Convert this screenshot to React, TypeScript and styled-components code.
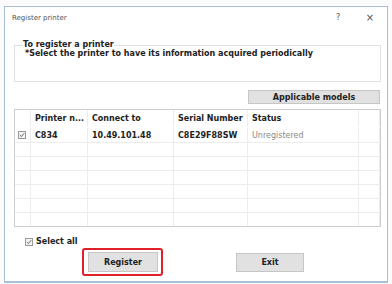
import React from "react";
import styled, { createGlobalStyle } from "styled-components";

const Global = createGlobalStyle`
  html, body { margin: 0; padding: 0; background: #ffffff; }
  body { font-family: "DejaVu Sans", Verdana, sans-serif; color: #1e1e1e; }
`;

const Page = styled.div`
  width: 392px;
  height: 284px;
  padding: 6px 4px 0 4px;
  box-sizing: border-box;
  background: #fbfbfb;
`;

const Window = styled.div`
  width: 384px;
  height: 277px;
  box-sizing: border-box;
  border: 1px solid #a9c0d8;
  border-bottom: 2px solid #a9c0d8;
  background: #ffffff;
  display: flex;
  flex-direction: column;
`;

const TitleBar = styled.div`
  height: 21px;
  display: flex;
  align-items: center;
  padding: 0 0 0 7px;
  font-size: 7px;
  color: #555;
`;

const TitleText = styled.div`
  flex: 1;
`;

const TitleButton = styled.div<{ $w: number }>`
  width: ${(p) => p.$w}px;
  text-align: center;
  font-size: ${(p) => (p.$w > 30 ? 10 : 8)}px;
  color: #555;
`;

const Content = styled.div`
  flex: 1;
  display: flex;
  flex-direction: column;
  padding: 12px 6px 0 9px;
`;

const Group = styled.fieldset`
  margin: 0;
  padding: 1px 6px 0 10px;
  height: 42px;
  box-sizing: border-box;
  border: 1px solid #e2e2e2;
  width: 367px;
`;

const Legend = styled.legend`
  padding: 0;
  margin-left: -2px;
  font-size: 8px;
  font-weight: bold;
  line-height: 10px;
  color: #222;
`;

const GroupText = styled.div`
  font-size: 8px;
  font-weight: bold;
  line-height: 10px;
  color: #222;
  margin-top: -2px;
`;

const RightRow = styled.div`
  display: flex;
  justify-content: flex-end;
  margin-top: 8px;
  width: 366px;
`;

const Button = styled.div<{ $w: number; $h: number }>`
  width: ${(p) => p.$w}px;
  height: ${(p) => p.$h}px;
  box-sizing: border-box;
  background: #e1e1e1;
  border: 1px solid #c6c6c6;
  display: flex;
  align-items: center;
  justify-content: center;
  font-size: 8px;
  font-weight: bold;
  color: #222;
`;

const Table = styled.div`
  margin-top: 5px;
  width: 367px;
  height: 118px;
  box-sizing: border-box;
  border: 1px solid #cfcfcf;
  overflow: hidden;
  display: flex;
  flex-direction: column;
`;

const Row = styled.div<{ $h: number; $line: boolean }>`
  display: grid;
  grid-template-columns: 16px 57px 86px 74px 111px 1fr;
  height: ${(p) => p.$h}px;
  flex-shrink: 0;
  border-bottom: 1px solid ${(p) => (p.$line ? "#ececec" : "transparent")};
  box-sizing: border-box;
`;

const Cell = styled.div<{ $bold?: boolean; $muted?: boolean }>`
  border-right: 1px solid #ececec;
  display: flex;
  align-items: center;
  padding-left: 4px;
  font-size: 8px;
  font-weight: ${(p) => (p.$bold ? "bold" : "normal")};
  color: ${(p) => (p.$muted ? "#8a8a8a" : "#222")};
  white-space: nowrap;
  overflow: hidden;
`;

const CheckCell = styled(Cell)`
  padding-left: 3px;
`;

const Box = styled.span`
  width: 8px;
  height: 8px;
  box-sizing: border-box;
  border: 1px solid #9a9a9a;
  background: #f4f4f4;
  display: inline-flex;
  align-items: center;
  justify-content: center;
`;

const SelectRow = styled.div`
  display: flex;
  align-items: center;
  gap: 3px;
  margin: 10px 0 0 11px;
  font-size: 8px;
  font-weight: bold;
  color: #222;
`;

const ButtonRow = styled.div`
  display: flex;
  align-items: center;
  margin: 2px 0 0 68px;
`;

const Highlight = styled.div`
  border: 2px solid #e0212b;
  border-radius: 3px;
  padding: 2px 3px 2px 4px;
`;

const Spacer = styled.div`
  width: 73px;
`;

const Check = () => (
  <Box>
    <svg width="6" height="6" viewBox="0 0 6 6">
      <path d="M0.8 3.1 L2.4 4.6 L5.2 1.2" stroke="#6a6a6a" strokeWidth="1" fill="none" />
    </svg>
  </Box>
);

export default function App() {
  const empty = Array.from({ length: 6 });
  return (
    <>
      <Global />
      <Page>
        <Window>
          <TitleBar>
            <TitleText>Register printer</TitleText>
            <TitleButton $w={30}>?</TitleButton>
            <TitleButton $w={34}>×</TitleButton>
          </TitleBar>
          <Content>
            <Group>
              <Legend>To register a printer</Legend>
              <GroupText>*Select the printer to have its information acquired periodically</GroupText>
            </Group>
            <RightRow>
              <Button $w={132} $h={14}>Applicable models</Button>
            </RightRow>
            <Table>
              <Row $h={18} $line={false}>
                <Cell />
                <Cell $bold>Printer n...</Cell>
                <Cell $bold>Connect to</Cell>
                <Cell $bold>Serial Number</Cell>
                <Cell $bold>Status</Cell>
                <Cell />
              </Row>
              <Row $h={15} $line>
                <CheckCell><Check /></CheckCell>
                <Cell $bold>C834</Cell>
                <Cell $bold>10.49.101.48</Cell>
                <Cell $bold>C8E29F88SW</Cell>
                <Cell $muted>Unregistered</Cell>
                <Cell />
              </Row>
              {empty.map((_, i) => (
                <Row key={i} $h={14} $line>
                  <Cell />
                  <Cell />
                  <Cell />
                  <Cell />
                  <Cell />
                  <Cell />
                </Row>
              ))}
            </Table>
            <SelectRow>
              <Check />
              Select all
            </SelectRow>
            <ButtonRow>
              <Highlight>
                <Button $w={70} $h={20}>Register</Button>
              </Highlight>
              <Spacer />
              <Button $w={68} $h={19}>Exit</Button>
            </ButtonRow>
          </Content>
        </Window>
      </Page>
    </>
  );
}
